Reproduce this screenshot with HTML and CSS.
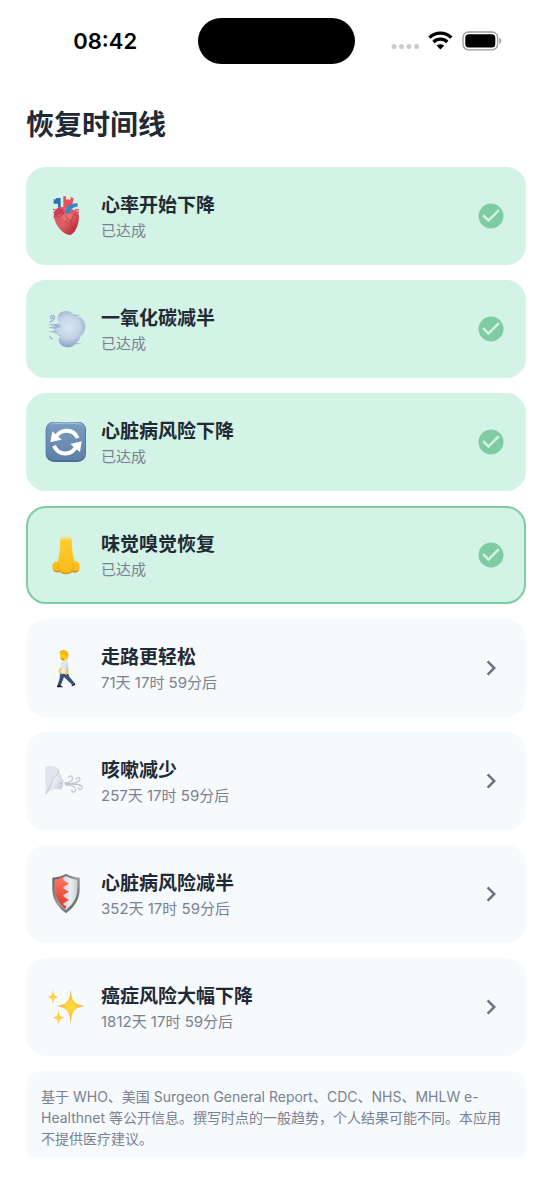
FILE: index.html
```html
<!DOCTYPE html>
<html lang="zh-CN">
<head>
<meta charset="utf-8">
<meta name="viewport" content="width=device-width, initial-scale=1">
<title>恢复时间线</title>
<link rel="stylesheet" href="styles.css">
</head>
<body>
<svg class="defs" aria-hidden="true">
  <defs>
    <linearGradient id="heartRed" x1="0" y1="0" x2="1" y2="1"><stop offset="0" stop-color="#e0566a"/><stop offset=".5" stop-color="#dd5f63"/><stop offset="1" stop-color="#a81932"/></linearGradient>
    <radialGradient id="cloud" gradientUnits="userSpaceOnUse" cx="98" cy="80" r="58"><stop offset="0" stop-color="#dbe6f4"/><stop offset=".6" stop-color="#c3d2e7"/><stop offset="1" stop-color="#8fa5c5"/></radialGradient>
    <linearGradient id="tile" x1="0" y1="0" x2="0" y2="1"><stop offset="0" stop-color="#7b9dc1"/><stop offset="1" stop-color="#5f80a6"/></linearGradient>
    <linearGradient id="nose" x1="0" y1="0" x2="0" y2="1"><stop offset="0" stop-color="#ffe08a" stop-opacity=".3"/><stop offset=".12" stop-color="#ffcd2e"/><stop offset="1" stop-color="#f9b91a"/></linearGradient>
    <linearGradient id="face" x1="0" y1="0" x2="1" y2="1"><stop offset="0" stop-color="#c3ccd6"/><stop offset=".45" stop-color="#eef2f6"/><stop offset="1" stop-color="#b3bdc9"/></linearGradient>
    <linearGradient id="steel" x1="0" y1="0" x2="1" y2="1"><stop offset="0" stop-color="#55585b"/><stop offset=".5" stop-color="#999da0"/><stop offset="1" stop-color="#4b4e51"/></linearGradient>
    <linearGradient id="silver" x1="0" y1="0" x2="1" y2="0"><stop offset="0" stop-color="#a9b0b5"/><stop offset=".7" stop-color="#e9eef1"/><stop offset="1" stop-color="#c8ced2"/></linearGradient>
    <linearGradient id="shieldRed" x1="0" y1="0" x2="0" y2="1"><stop offset="0" stop-color="#ff765f"/><stop offset="1" stop-color="#d93a2b"/></linearGradient>
    <radialGradient id="star" cx=".5" cy=".5" r=".5"><stop offset="0" stop-color="#ffe03d"/><stop offset=".45" stop-color="#fdc935"/><stop offset="1" stop-color="#f3a06a"/></radialGradient>
    <symbol id="check" viewBox="0 0 24 24"><path d="M12 2a10 10 0 1 0 0 20 10 10 0 0 0 0-20zm-2 15-5-5 1.400-1.400 3.600 3.600 7.600-7.600L19 8z"/></symbol>
    <symbol id="chevron" viewBox="0 0 24 24"><path d="M8.600 16.600 13.200 12 8.600 7.400 10 6l6 6-6 6z"/></symbol>
  </defs>
</svg>

<header class="status-bar">
  <div class="status-side"><time class="clock">08:42</time></div>
  <div class="island"></div>
  <div class="status-side">
    <svg class="status-icons" viewBox="0 0 112 24" aria-label="信号、无线网络和电量">
      <g fill="#cbcbcb"><circle cx="3" cy="17.500" r="2.500"/><circle cx="10.500" cy="17.500" r="2.500"/><circle cx="18" cy="17.500" r="2.500"/><circle cx="25.500" cy="17.500" r="2.500"/></g>
      <g fill="none" stroke="#000" stroke-width="3.200"><path d="M38.500 8.700a15.300 15.300 0 0 1 21.800 0"/><path d="M42.500 13a9.800 9.800 0 0 1 13.800 0"/></g>
      <path d="M45.700 16.800a5.400 5.400 0 0 1 7.400 0L49.400 20.500z"/>
      <rect x="72" y="3" width="34.600" height="17.800" rx="5.500" fill="none" stroke="#999" stroke-width="1.300"/>
      <rect x="74.300" y="5.300" width="30" height="13.200" rx="3.500"/>
      <path d="M108.300 8.800c2.600.8 2.600 5.400 0 6.200z" fill="#999"/>
    </svg>
  </div>
</header>

<main class="scroll">
  <h1 class="heading">恢复时间线</h1>
  <ul class="timeline">
    <li><button class="card done">
      <svg class="emoji" viewBox="27 33 123 123"><path d="M66 72V56H53V43H60V39H74V76z" fill="#2d72b2"/><path d="M82 64V34h8v10q8-3 12 2l3-10 8 4-3 15-12 12-18 4z" fill="#e85157"/><path d="M117 75l12-1M118 82l11-1M60 76l-9-4M60 83l-8-2" stroke="#dc4c5b" stroke-width="4"/><path d="M69 66c14-4 22 8 31 8 14-3 30 5 29 21 0 25-13 53-28 55-17 0-45-28-47-56-1-13 7-24 15-28z" fill="url(#heartRed)"/><path d="M53 100c0-20 8-32 20-31 8 4 12 10 11 18-12 0-22 3-31 13z" fill="#cc3d58"/><path d="M77 95c10-12 28-12 38-4-8 6-10 15-18 17-8 0-15-3-20-13z" fill="#f47c78" opacity=".65"/><path d="M88 84c0-17 10-30 37-29v10c-12 0-20 6-24 19-4 3-9 3-13 0z" fill="#3a86c4"/><path d="M87 90l7 11-5 13M94 101l11 8 3 18 7 8M105 109l7-19 8-3M61 96l13-2 10-8" fill="none" stroke="#963451" stroke-width="1.500"/></svg>
      <span class="text"><strong class="title">心率开始下降</strong><span class="sub">已达成</span></span>
      <svg class="mark"><use href="#check"/></svg>
    </button></li>
    <li><button class="card done">
      <svg class="emoji" viewBox="27 26 123 123"><path d="M83 40l53 4-30 5zM92 125l48 5-40 3zM34 73l30-3 30 4v30l-32 4 18-8-42-6 30-5-32-8 26-3z" fill="#a3b4cf"/><path d="M65 58c-2-15 8-25 25-26 12 0 20 5 22 14 19-1 36 13 36 32 0 15-8 26-16 31 0 9-7 16-13 19-5 9-14 14-26 13-15-2-25-11-25-22 0-5 3-10 8-14-13-1-22-7-22-14 2-6 9-10 24-10-8-4-12-12-13-23z" fill="url(#cloud)"/><path d="M40 66c15-5 19-16 13-20-6-3-11 3-9 7 3 4 8 0 6-4M42 107c-1 7 5 10 8 6" fill="none" stroke="#9aaeca" stroke-width="3.500"/></svg>
      <span class="text"><strong class="title">一氧化碳减半</strong><span class="sub">已达成</span></span>
      <svg class="mark"><use href="#check"/></svg>
    </button></li>
    <li><button class="card done">
      <svg class="emoji" viewBox="27 29 123 123"><rect x="29" y="28" width="121" height="121" rx="25" fill="#486c96"/><rect x="31" y="29" width="117" height="115" rx="23" fill="url(#tile)"/><path d="M43 35q46-6 93 0" fill="none" stroke="#aac5df" stroke-width="3"/><path d="M59 78c8-28 52-32 66-1M121 100c-12 31-54 31-67 0" fill="none" stroke="#fff" stroke-width="12"/><path d="M49 57l-6 32 34-7zM137 87l-34 8 29 24z" fill="#fff"/></svg>
      <span class="text"><strong class="title">心脏病风险下降</strong><span class="sub">已达成</span></span>
      <svg class="mark"><use href="#check"/></svg>
    </button></li>
    <li><button class="card done current">
      <svg class="emoji" viewBox="27 28 123 123"><path d="M73 31h34c0 27 2 54 8 76 11-1 18 6 16 17-2 12-13 16-23 11-10 10-27 10-36 0-12 5-22-1-23-11-1-11 6-17 16-16 7-24 8-49 8-77z" fill="url(#nose)"/><path d="M50 125c3 12 13 13 22 9 10 11 26 11 36 0 11 5 21 1 23-10-1 17-13 20-23 15-10 9-27 9-36 0-10 4-22 0-22-14z" fill="#dc8e14"/><path d="M69 114c-5 7-5 15 3 18M110 114c5 7 4 14-2 18" fill="none" stroke="#e9a016" stroke-width="3"/></svg>
      <span class="text"><strong class="title">味觉嗅觉恢复</strong><span class="sub">已达成</span></span>
      <svg class="mark"><use href="#check"/></svg>
    </button></li>
    <li><button class="card">
      <svg class="emoji" viewBox="27 28 123 123"><path d="M72 101l-1 18-7 23h10l10-27 24 23 7-6-16-19-3-14z" fill="#3c4f7c"/><path d="M64 140h9l9 6H63zM107 139l9-7 2 7-11 4z" fill="#1d1d24"/><path d="M79 64c12-3 20 5 20 16l-1 26-26-1 1-26z" fill="#e3e7eb"/><path d="M74 89l-4 9 5 7M92 90l3 6-5 11" fill="none" stroke="#f7be2b" stroke-width="4.500" stroke-linecap="round"/><path d="M91 73l1 17" stroke="#c1c8cf" stroke-width="2"/><path d="M72 42q8-10 22-3 7 10-1 25l-14 2-6-5z" fill="#ffc928"/><path d="M70 44c0-11 17-13 24-5 5 5 3 14 0 20l-6-10z" fill="#f8b90f"/><path d="M76 61l8 1" stroke="#a87627" stroke-width="3"/></svg>
      <span class="text"><strong class="title">走路更轻松</strong><span class="sub">71天 17时 59分后</span></span>
      <svg class="mark"><use href="#chevron"/></svg>
    </button></li>
    <li><button class="card">
      <svg class="emoji" viewBox="27 31 123 123"><path d="M29 49c18-7 42-2 43 16l2 10 10 18-4 4 1 8-5 11-15-2c-7 0-12 2-18 8l-14 13z" fill="url(#face)"/><path d="M30 49c17-7 31-2 37 9 3 12-5 16-15 25-7 12-9 35-23 50z" fill="#dfe5ec"/><path d="M67 58c4 15-10 17-16 28-5 15-10 31-22 42M67 77l8-2M70 98l10 1" fill="none" stroke="#b4bec9" stroke-width="2.500"/><path d="M85 97c18 0 27-8 24-17-3-8-13-4-10 3M87 99c20 0 42-1 45-13-1-9-14-6-10 2M88 101c22-1 44-4 51 8 0 10-14 9-11 0M88 103c20 0 32 4 31 16-3 9-14 6-11-2" fill="none" stroke="#bcc6d0" stroke-width="3.500"/></svg>
      <span class="text"><strong class="title">咳嗽减少</strong><span class="sub">257天 17时 59分后</span></span>
      <svg class="mark"><use href="#chevron"/></svg>
    </button></li>
    <li><button class="card">
      <svg class="emoji" viewBox="27 28 123 123"><path d="M90 27c12 8 25 11 41 12v33c0 30-14 54-41 74-27-20-41-44-41-74V39c16-1 29-4 41-12z" fill="url(#steel)"/><path d="M90 34c10 7 21 10 34 11v28c0 25-11 44-34 63-23-19-34-38-34-63V45c13-1 24-4 34-11z" fill="url(#silver)"/><path d="M82 37v9l17 11-17 10v4l17 10-17 10v4l17 11-17 10v4l9 5-3 8C67 115 56 96 56 73V45c11-1 18-4 26-8z" fill="url(#shieldRed)"/></svg>
      <span class="text"><strong class="title">心脏病风险减半</strong><span class="sub">352天 17时 59分后</span></span>
      <svg class="mark"><use href="#chevron"/></svg>
    </button></li>
    <li><button class="card">
      <svg class="emoji" viewBox="27 31 123 123"><g fill="url(#star)"><path d="M104 38c3 34 9 46 44 50-35 4-41 18-44 56-3-38-9-52-44-56 35-4 41-16 44-50z"/><path d="M51 37c1 17 4 22 17 24-13 2-16 8-17 26-1-18-4-24-17-26 13-2 16-7 17-24z"/><path d="M68 98c1 17 4 23 18 25-14 2-17 7-18 24-1-17-4-22-18-24 14-2 17-8 18-25z"/></g></svg>
      <span class="text"><strong class="title">癌症风险大幅下降</strong><span class="sub">1812天 17时 59分后</span></span>
      <svg class="mark"><use href="#chevron"/></svg>
    </button></li>
  </ul>
  <p class="note">基于 WHO、美国 Surgeon General Report、CDC、NHS、MHLW e-Healthnet 等公开信息。撰写时点的一般趋势，个人结果可能不同。本应用不提供医疗建议。</p>
</main>
</body>
</html>
```

FILE: styles.css
```css
* {
  box-sizing: border-box;
}

body {
  margin: 0;
  height: 100vh;
  padding-bottom: 43px;
  display: flex;
  flex-direction: column;
  background: #fff;
  color: #1f2a35;
  font-family: Inter, "Noto Sans CJK SC", sans-serif;
}

.defs {
  position: absolute;
  width: 0;
  height: 0;
}

.status-bar {
  flex: none;
  display: flex;
  align-items: center;
  padding: 18px 0;
}

.status-side {
  flex: 1;
  display: flex;
  align-items: center;
  justify-content: center;
}

.clock {
  padding-left: 13px;
  color: #000;
  font-size: 22px;
  line-height: 28px;
  font-weight: 600;
}

.island {
  width: 157px;
  height: 46px;
  border-radius: 23px;
  background: #000;
}

.status-icons {
  width: 112px;
  height: 24px;
  margin-right: 12px;
}

.scroll {
  flex: 1;
  min-height: 0;
  overflow: hidden;
  padding: 23px 26px 0;
}

.heading {
  margin: 0 0 22px;
  font-size: 28px;
  line-height: 40px;
  font-weight: 600;
}

.timeline {
  display: flex;
  flex-direction: column;
  gap: 15px;
  margin: 0 0 15px;
  padding: 0;
  list-style: none;
}

.card {
  display: flex;
  align-items: center;
  gap: 15px;
  width: 100%;
  padding: 22px 18px 22px 17px;
  border: 2px solid transparent;
  border-radius: 20px;
  background: #f6fafd;
  color: inherit;
  font: inherit;
  text-align: left;
}

.done {
  border-color: #d3f3e6;
  background: #d3f3e6;
}

.current {
  border-color: #7fcca4;
}

.emoji {
  flex: none;
  width: 41px;
  height: 41px;
}

.text {
  flex: 1;
  display: flex;
  flex-direction: column;
}

.title {
  font-size: 19px;
  line-height: 30px;
  font-weight: 600;
}

.sub {
  color: #7a8190;
  font-size: 15px;
  line-height: 20px;
}

.mark {
  flex: none;
  width: 30px;
  height: 30px;
  fill: #6b7283;
}

.done .mark {
  fill: #7fcca4;
}

.note {
  margin: 0;
  padding: 15px;
  border-radius: 15px;
  background: #f6fafd;
  color: #7a8190;
  font-size: 14px;
  line-height: 21px;
}
```
